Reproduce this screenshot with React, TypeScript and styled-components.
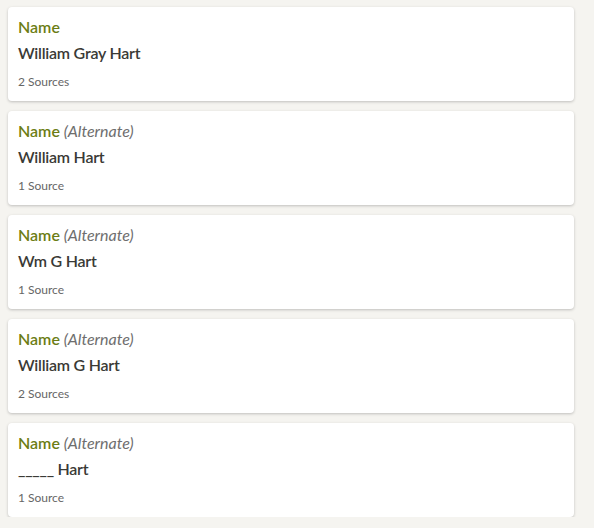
import React from "react";
import styled, { createGlobalStyle } from "styled-components";

const Global = createGlobalStyle`
  html, body { margin: 0; padding: 0; background: #f5f4f0; }
  body { font-family: Lato, "Noto Sans", sans-serif; }
`;

const List = styled.div`
  display: flex;
  flex-direction: column;
  gap: 10px;
  padding: 7px 0 0 8px;
  width: 566px;
`;

const Card = styled.div`
  background: #ffffff;
  border-radius: 4px;
  box-shadow: 0 1px 3px rgba(0, 0, 0, 0.22);
  padding: 10px 10px 11px 10px;
  height: 94px;
  box-sizing: border-box;
  display: flex;
  flex-direction: column;
`;

const Label = styled.div`
  font-size: 16px;
  line-height: 20px;
  font-weight: 600;
  color: #6c7d14;
`;

const Qualifier = styled.span`
  font-weight: 400;
  font-style: italic;
  color: #6e6e6e;
`;

const Value = styled.div`
  margin-top: 6px;
  font-size: 16px;
  line-height: 20px;
  font-weight: 600;
  letter-spacing: -0.25px;
  color: #3a3a36;
`;

const Sources = styled.div`
  margin-top: 11px;
  font-size: 12px;
  line-height: 16px;
  color: #666666;
`;

const items = [
  { alt: false, value: "William Gray Hart", sources: "2 Sources" },
  { alt: true, value: "William Hart", sources: "1 Source" },
  { alt: true, value: "Wm G Hart", sources: "1 Source" },
  { alt: true, value: "William G Hart", sources: "2 Sources" },
  { alt: true, value: "_____ Hart", sources: "1 Source" },
];

export default function App() {
  return (
    <>
      <Global />
      <List>
        {items.map((it, i) => (
          <Card key={i}>
            <Label>
              Name{it.alt && <Qualifier> (Alternate)</Qualifier>}
            </Label>
            <Value>{it.value}</Value>
            <Sources>{it.sources}</Sources>
          </Card>
        ))}
      </List>
    </>
  );
}
